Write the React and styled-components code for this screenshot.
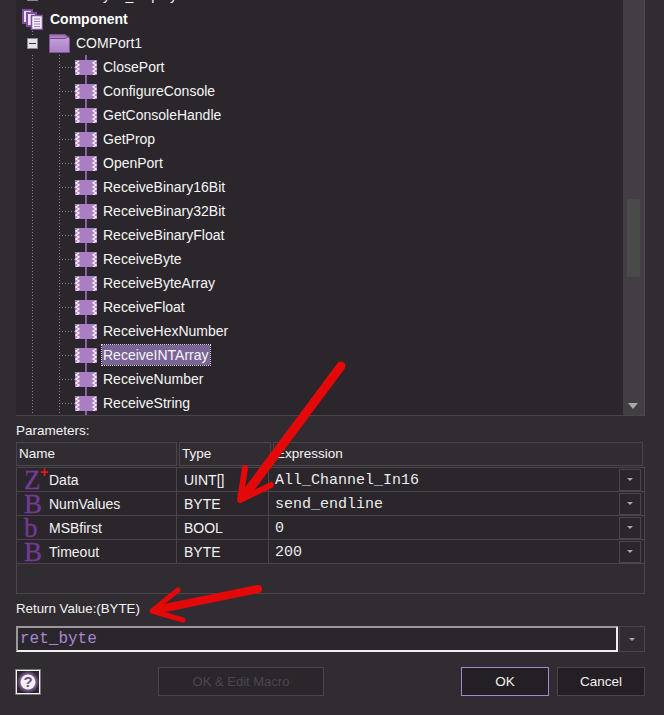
import React from 'react';
import styled, {createGlobalStyle} from 'styled-components';

const FUNCTIONS = [
  'ClosePort',
  'ConfigureConsole',
  'GetConsoleHandle',
  'GetProp',
  'OpenPort',
  'ReceiveBinary16Bit',
  'ReceiveBinary32Bit',
  'ReceiveBinaryFloat',
  'ReceiveByte',
  'ReceiveByteArray',
  'ReceiveFloat',
  'ReceiveHexNumber',
  'ReceiveINTArray',
  'ReceiveNumber',
  'ReceiveString',
];

const PARAMS = [
  {letter: 'Z', plus: true, name: 'Data', type: 'UINT[]', expr: 'All_Channel_In16'},
  {letter: 'B', name: 'NumValues', type: 'BYTE', expr: 'send_endline'},
  {letter: 'b', name: 'MSBfirst', type: 'BOOL', expr: '0'},
  {letter: 'B', name: 'Timeout', type: 'BYTE', expr: '200'},
];

const DOTS = 'rgba(170, 165, 170, 0.75)';

const FunctionIcon = () => (
  <StyledFnIcon width="22" height="15" viewBox="0 0 22 15">
    <rect x="0" y="0" width="22" height="15" fill="#a97fc2" />
    <path
      d="M4 1 L1 3 L4 5 L1 7 L4 9 L1 11 L4 13 L1 15 M21 1 L18 3 L21 5 L18 7 L21 9 L18 11 L21 13 L18 15"
      fill="none"
      stroke="#f4eef7"
      strokeWidth="1.4"
    />
  </StyledFnIcon>
);

const FolderIcon = () => (
  <svg width="21" height="19" viewBox="0 0 21 19">
    <defs>
      <linearGradient id="folderFill" x1="0" y1="0" x2="0" y2="1">
        <stop offset="0" stopColor="#8f63a8" />
        <stop offset="0.25" stopColor="#c39bd8" />
        <stop offset="1" stopColor="#a97fc2" />
      </linearGradient>
    </defs>
    <path d="M0.5 18.5 V0.5 H16 L20.5 4 V18.5 Z" fill="url(#folderFill)" stroke="#7d5693" />
    <path d="M1 4.5 H16 L20 2" fill="none" stroke="#6f4a86" />
  </svg>
);

const PagesIcon = () => (
  <svg width="21" height="21" viewBox="0 0 21 21">
    <rect x="1" y="1" width="9" height="13" fill="#e9dff0" stroke="#7e4f9e" strokeWidth="2" />
    <rect x="5" y="4" width="9" height="13" fill="#e9dff0" stroke="#7e4f9e" strokeWidth="2" />
    <rect x="9.5" y="6.5" width="11" height="14" fill="#f3eef6" stroke="#7e4f9e" strokeWidth="1.5" />
    <path d="M12 10 H18 M12 12.5 H18 M12 15 H18 M12 17.5 H18" stroke="#a77fc0" />
  </svg>
);

const HelpIcon = () => (
  <svg width="22" height="22" viewBox="0 0 22 22">
    <defs>
      <radialGradient id="helpRing">
        <stop offset="0.7" stopColor="#7f5f90" />
        <stop offset="1" stopColor="#3c2f42" />
      </radialGradient>
    </defs>
    <circle cx="11" cy="11" r="11" fill="url(#helpRing)" />
    <circle cx="11" cy="11" r="7.5" fill="#f4f0f5" />
    <text x="11" y="16" textAnchor="middle" fontFamily="Liberation Sans, sans-serif" fontWeight="700" fontSize="15" fill="#6d4f80">
      ?
    </text>
  </svg>
);

const App = () => {
  return (
    <>
      <GlobalStyle />
      <Dialog>
        <TreePanel>
          <TreeList>
            <TreeRow>
              <MinusBox $muted />
              <CutText>yun_display1</CutText>
            </TreeRow>
            <RootRow>
              <PagesIcon />
              <RootLabel>Component</RootLabel>
            </RootRow>
            <FolderRow>
              <MinusBox />
              <FolderIcon />
              <TreeLabel>COMPort1</TreeLabel>
            </FolderRow>
            {FUNCTIONS.map(name => (
              <LeafRow key={name}>
                <FunctionIcon />
                <LeafLabel $selected={name === 'ReceiveINTArray'}>{name}</LeafLabel>
              </LeafRow>
            ))}
          </TreeList>
          <Scrollbar>
            <ScrollThumb />
            <BigCaret />
          </Scrollbar>
        </TreePanel>

        <SectionLabel>Parameters:</SectionLabel>
        <HeaderRow>
          <HeaderCell $w={161}>Name</HeaderCell>
          <HeaderCell $w={92}>Type</HeaderCell>
          <HeaderCell $w={370}>Expression</HeaderCell>
        </HeaderRow>
        <ParamTable>
          {PARAMS.map(p => (
            <ParamRow key={p.name}>
              <NameCell>
                <TypeLetter>
                  {p.letter}
                  {p.plus ? <Plus>+</Plus> : null}
                </TypeLetter>
                {p.name}
              </NameCell>
              <TypeCell>{p.type}</TypeCell>
              <ExprCell>
                <ExprText>{p.expr}</ExprText>
                <RowDrop>
                  <SmallCaret />
                </RowDrop>
              </ExprCell>
            </ParamRow>
          ))}
        </ParamTable>

        <ReturnLabel>Return Value:(BYTE)</ReturnLabel>
        <ReturnRow>
          <ReturnInput>ret_byte</ReturnInput>
          <ReturnDrop>
            <SmallCaret />
          </ReturnDrop>
        </ReturnRow>

        <ButtonBar>
          <HelpButton>
            <HelpIcon />
          </HelpButton>
          <DisabledButton>OK &amp; Edit Macro</DisabledButton>
          <Spacer />
          <OkButton>OK</OkButton>
          <CancelButton>Cancel</CancelButton>
        </ButtonBar>

        <ArrowLayer width="664" height="715" viewBox="0 0 664 715">
          <g fill="none" stroke="#e50808" strokeLinecap="round" strokeLinejoin="round">
            <path d="M341 366 L245 495" strokeWidth="9" />
            <path d="M245 468 L240 500 L271 485" strokeWidth="6" />
            <path d="M258 589 L160 609" strokeWidth="8" />
            <path d="M178 590 L152 611 L183 620" strokeWidth="5" />
          </g>
        </ArrowLayer>
      </Dialog>
    </>
  );
};

const GlobalStyle = createGlobalStyle`
  html, body {
    margin: 0;
    padding: 0;
    background: #312c32;
  }
`;

const Dialog = styled.div`
  position: relative;
  width: 664px;
  height: 715px;
  box-sizing: border-box;
  padding: 0 19px 0 16px;
  overflow: hidden;
  background: #312c32;
  color: #f4f4f4;
  font-family: 'Liberation Sans', Arial, sans-serif;
  font-size: 14px;
`;

const TreePanel = styled.div`
  display: flex;
  height: 416px;
  box-sizing: border-box;
  overflow: hidden;
  background: #2a262b;
  border-bottom: 1px solid #4a454b;
`;

const TreeList = styled.div`
  flex: 1;
  margin-top: -17px;
`;

const TreeRow = styled.div`
  display: flex;
  align-items: center;
  height: 24px;
  box-sizing: border-box;
  padding-left: 11px;
`;

const RootRow = styled(TreeRow)`
  padding-left: 6px;
  gap: 7px;
`;

const FolderRow = styled(TreeRow)`
  background: repeating-linear-gradient(to bottom, ${DOTS} 0 1px, transparent 1px 3px) 16px 0 / 1px 6px no-repeat;
`;

const LeafRow = styled(TreeRow)`
  padding-left: 59px;
  background:
    repeating-linear-gradient(to bottom, ${DOTS} 0 1px, transparent 1px 3px) 16px 0 / 1px 100% no-repeat,
    repeating-linear-gradient(to bottom, ${DOTS} 0 1px, transparent 1px 3px) 43px 0 / 1px 100% no-repeat,
    repeating-linear-gradient(to right, ${DOTS} 0 1px, transparent 1px 3px) 43px 12px / 16px 1px no-repeat,
    linear-gradient(#8e62ab, #8e62ab) 69px 0 / 2px 100% no-repeat;
`;

const MinusBox = styled.span`
  position: relative;
  flex: none;
  width: 11px;
  height: 11px;
  margin-right: 11px;
  box-sizing: border-box;
  background: ${props => (props.$muted ? '#777' : '#e4e4e4')};
  border: 1px solid #8b8b8b;

  &::after {
    content: '';
    position: absolute;
    left: 1px;
    right: 1px;
    top: 4px;
    height: 1px;
    background: #303060;
  }
`;

const StyledFnIcon = styled.svg`
  flex: none;
  margin-right: 5px;
`;

const CutText = styled.span`
  margin-left: 54px;
  color: #f4f4f4;
`;

const TreeLabel = styled.span`
  margin-left: 6px;
  line-height: 20px;
`;

const RootLabel = styled.span`
  font-weight: 700;
  font-size: 14px;
  color: #fff;
`;

const LeafLabel = styled.span`
  padding: 0 1px;
  line-height: 20px;
  color: #f6f6f6;
  ${props =>
    props.$selected &&
    `
    background: #7a6396;
    outline: 1px dotted #d8d8d8;
  `}
`;

const Scrollbar = styled.div`
  position: relative;
  flex: none;
  width: 22px;
  background: #433e44;
  border-right: 1px solid #4d484e;
  box-sizing: border-box;
`;

const ScrollThumb = styled.div`
  position: absolute;
  left: 4px;
  top: 199px;
  width: 13px;
  height: 78px;
  background: #4a4a4a;
`;

const BigCaret = styled.div`
  position: absolute;
  left: 5px;
  bottom: 6px;
  border-left: 5.5px solid transparent;
  border-right: 5.5px solid transparent;
  border-top: 6px solid #aaa;
`;

const SectionLabel = styled.div`
  height: 26px;
  line-height: 29px;
  font-size: 13.5px;
`;

const HeaderRow = styled.div`
  display: flex;
  gap: 2px;
  height: 24px;
`;

const HeaderCell = styled.div`
  width: ${props => props.$w}px;
  box-sizing: border-box;
  padding-left: 2px;
  line-height: 22px;
  border: 1px solid #4a454b;
  font-size: 13.5px;
`;

const ParamTable = styled.div`
  height: 127px;
  margin-top: 1px;
  box-sizing: border-box;
  background: #312c32;
  border: 1px solid #4a454b;
`;

const ParamRow = styled.div`
  display: grid;
  grid-template-columns: 160px 92px 1fr;
  height: 24px;
  box-sizing: border-box;
  background: #2a262b;
  border-bottom: 1px solid #4a454b;
`;

const NameCell = styled.div`
  display: flex;
  align-items: center;
  padding-top: 1px;
  border-right: 1px solid #4a454b;
`;

const TypeLetter = styled.span`
  position: relative;
  flex: none;
  width: 32px;
  padding-left: 7px;
  box-sizing: border-box;
  font-family: 'Liberation Serif', serif;
  font-size: 27px;
  line-height: 22px;
  color: #743a97;
  -webkit-text-stroke: 0.3px #743a97;
`;

const Plus = styled.span`
  position: absolute;
  left: 23px;
  top: -4px;
  font-family: 'Liberation Sans', sans-serif;
  font-size: 14px;
  font-weight: 700;
  line-height: 14px;
  color: #e01818;
  -webkit-text-stroke: 0;
`;

const TypeCell = styled.div`
  display: flex;
  align-items: center;
  padding: 1px 0 0 7px;
  border-right: 1px solid #4a454b;
`;

const ExprCell = styled.div`
  display: flex;
  align-items: center;
  justify-content: space-between;
  padding: 0 3px 0 6px;
`;

const ExprText = styled.span`
  padding-top: 2px;
  font-family: 'Liberation Mono', monospace;
  font-size: 15px;
  color: #ececec;
`;

const RowDrop = styled.div`
  display: flex;
  align-items: center;
  justify-content: center;
  width: 22px;
  height: 22px;
  box-sizing: border-box;
  border: 1px solid #4a454b;
`;

const SmallCaret = styled.div`
  border-left: 3px solid transparent;
  border-right: 3px solid transparent;
  border-top: 3px solid #a8a8a8;
`;

const ReturnLabel = styled.div`
  height: 32px;
  line-height: 30px;
  font-size: 13.3px;
`;

const ReturnRow = styled.div`
  display: flex;
  gap: 1px;
  height: 26px;
`;

const ReturnInput = styled.div`
  flex: 1;
  box-sizing: border-box;
  padding-left: 2px;
  line-height: 22px;
  background: #2a262b;
  border-top: 2px solid #999;
  border-left: 2px solid #999;
  border-right: 2px solid #f0f0f0;
  border-bottom: 2px solid #f0f0f0;
  font-family: 'Liberation Mono', monospace;
  font-size: 16px;
  color: #a886cf;
`;

const ReturnDrop = styled.div`
  display: flex;
  align-items: center;
  justify-content: center;
  width: 26px;
  box-sizing: border-box;
  border: 1px solid #4a454b;
`;

const ButtonBar = styled.div`
  display: flex;
  align-items: center;
  margin-top: 15px;
  height: 29px;
`;

const Spacer = styled.div`
  flex: 1;
`;

const HelpButton = styled.div`
  display: flex;
  align-items: center;
  justify-content: center;
  width: 24px;
  height: 24px;
  box-sizing: border-box;
  background: #2a262b;
  border: 1px solid #f2f2f2;
  outline: 1px solid #777;
`;

const BaseButton = styled.div`
  display: flex;
  align-items: center;
  justify-content: center;
  height: 29px;
  box-sizing: border-box;
  background: #231f24;
  border: 1px solid #4a454b;
  font-size: 13.5px;
  color: #f2f2f2;
`;

const DisabledButton = styled(BaseButton)`
  width: 166px;
  margin-left: 118px;
  font-size: 13px;
  color: #4a464b;
  background: #2a262b;
`;

const OkButton = styled(BaseButton)`
  width: 88px;
  border-color: #a688cc;
`;

const CancelButton = styled(BaseButton)`
  width: 88px;
  margin-left: 8px;
`;

const ArrowLayer = styled.svg`
  position: absolute;
  left: 0;
  top: 0;
  pointer-events: none;
`;

export default App;
